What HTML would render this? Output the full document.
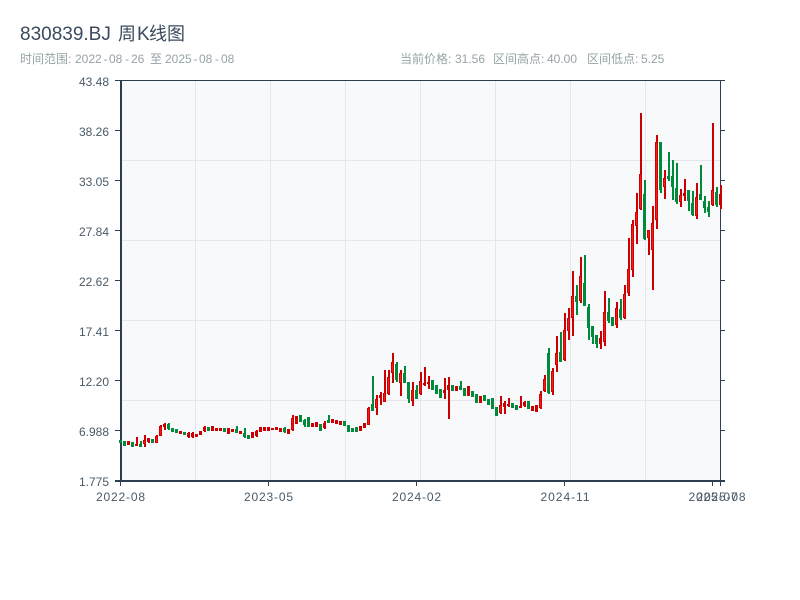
<!DOCTYPE html>
<html lang="zh">
<head>
<meta charset="utf-8">
<title>830839.BJ 周K线图</title>
<style>
html,body{margin:0;padding:0;background:#fff;width:800px;height:600px;overflow:hidden}
svg{display:block}
text{font-family:"Liberation Sans","Noto Sans CJK SC",sans-serif}
</style>
</head>
<body>
<svg width="800" height="600" viewBox="0 0 800 600" xmlns="http://www.w3.org/2000/svg">
<rect width="800" height="600" fill="#fff"/>
<text y="40" font-size="19" fill="#3b4b5c"><tspan x="20">830839.BJ</tspan> <tspan x="118" font-size="18">周</tspan><tspan x="137">K</tspan><tspan x="149" font-size="18">线图</tspan></text>
<text y="63" font-size="12" fill="#95a3a6"><tspan x="20">时间范围: </tspan><tspan x="75">2022</tspan><tspan x="103.500">-</tspan><tspan x="109">08</tspan><tspan x="125">-</tspan><tspan x="131">26</tspan><tspan x="150">至</tspan><tspan x="165">2025</tspan><tspan x="193.500">-</tspan><tspan x="199">08</tspan><tspan x="215">-</tspan><tspan x="221">08</tspan></text>
<text y="63" font-size="12" fill="#95a3a6"><tspan x="400">当前价格: </tspan><tspan x="455">31.56</tspan><tspan x="493">区间高点: </tspan><tspan x="547">40.00</tspan><tspan x="587">区间低点: </tspan><tspan x="641">5.25</tspan></text>

<rect x="120" y="81" width="600" height="400" fill="#f7f9fb"/>
<path d="M195.500 81V481M270.500 81V481M345.500 81V481M420.500 81V481M495.500 81V481M570.500 81V481M645.500 81V481M120 160.500H720M120 240.500H720M120 320.500H720M120 400.500H720" stroke="#e4e6eb" stroke-width="1" fill="none"/>

<path d="M121 80V482M115 481H725" stroke="#2c3e50" stroke-width="2" fill="none"/>
<path d="M720.500 80V481M115 80.500H725" stroke="#2c3e50" stroke-width="1" fill="none"/>
<path d="M115 130.500H120M115 180.500H120M115 230.500H120M115 280.500H120M115 330.500H120M115 380.500H120M115 430.500H120M720 130.500H725M720 180.500H725M720 230.500H725M720 280.500H725M720 330.500H725M720 380.500H725M720 430.500H725M120.500 481V486M268.500 481V486M416.500 481V486M564.500 481V486M712.500 481V486M720.500 481V486" stroke="#2c3e50" stroke-width="1" fill="none"/>

<g font-size="12" fill="#4a5a68" text-anchor="end">
<text x="109" y="86">43.48</text>
<text x="109" y="136">38.26</text>
<text x="109" y="186">33.05</text>
<text x="109" y="236">27.84</text>
<text x="109" y="286">22.62</text>
<text x="109" y="336">17.41</text>
<text x="109" y="386">12.20</text>
<text x="109" y="436">6.988</text>
<text x="109" y="486">1.775</text>
</g>
<g font-size="12" fill="#4a5a68" text-anchor="middle">
<text x="120.500" y="501" textLength="49">2022-08</text>
<text x="268.500" y="501" textLength="49">2023-05</text>
<text x="416.500" y="501" textLength="49">2024-02</text>
<text x="565" y="501" textLength="49">2024-11</text>
<text x="713" y="501" textLength="49">2025-07</text>
<text x="721" y="501" textLength="49">2025-08</text>
</g>

<g transform="translate(1 0)">
<!-- green wicks -->
<path fill="none" stroke="#008a3c" stroke-width="2" d="M120 440V443M124 441V446M132 442V447M140 441V447M152 439V443M168 423V430M172 428V432M176 429V433M184 432V435M208 427V431M224 428V432M236 426V433M244 428V438M248 435V439M284 427V433M300 415V422M304 419V427M308 417V427M320 424V431M328 415V423M344 421V426M348 425V432M352 428V432M356 427V432M372 376V411M396 362V382M404 366V383M408 382V403M416 385V399M432 380V390M436 385V394M440 389V398M452 385V391M460 381V390M464 388V396M472 391V397M476 394V403M484 395V401M488 399V405M492 398V409M496 407V416M512 403V408M516 405V410M528 401V409M548 348V394M560 332V362M576 285V315M584 255V306M588 304V340M592 326V344M596 335V348M608 298V323M612 317V326M620 299V320M644 180V240M660 142V193M668 152V181M672 160V200M676 163V204M688 190V211M692 191V216M700 165V200M704 196V213M708 201V217M716 187V207"/>
<!-- red wicks -->
<path fill="none" stroke="#cc0000" stroke-width="2" d="M128 441V445M136 437V446M144 435V447M148 438V443M156 435V443M160 425V436M164 423V430M180 431V434M188 432V438M192 432V438M196 434V437M200 431V435M204 426V432M212 426V431M216 428V431M220 428V431M228 428V434M232 429V432M240 431V434M252 432V438M256 430V437M260 427V432M264 427V431M268 427V431M272 428V430M276 427V430M280 428V432M288 429V434M292 415V431M296 416V424M312 423V427M316 422V427M324 421V429M332 419V423M336 420V424M340 421V425M360 426V431M364 423V428M368 407V425M376 395V415M380 392V405M384 370V402M388 370V395M392 353V383M400 370V396M412 382V406M420 372V395M424 367V386M428 376V389M444 378V399M448 377V419M456 386V391M468 386V396M480 396V403M500 396V414M504 401V414M508 398V407M520 396V408M524 401V407M532 406V411M536 405V412M540 391V409M544 375V392M552 368V395M556 336V372M564 313V361M568 308V340M572 271V336M580 257V303M600 331V349M604 291V346M616 302V328M624 285V319M628 238V296M632 220V277M636 193V244M640 113V210M648 230V255M652 206V290M656 135V229M664 170V199M680 189V207M684 179V201M696 183V219M712 123V206M720 185V209"/>
</g>
<g transform="translate(0.500 0)">
<!-- green bodies -->
<path fill="none" stroke="#008a3c" stroke-width="3" d="M120 440V443M124 441V446M132 442V447M140 444V447M152 439V443M168 424V429M172 428V432M176 429V433M184 432V435M208 427V431M224 428V432M236 429V433M244 433V437M248 435V439M284 428V432M300 415V422M304 420V425M308 417V427M320 424V431M328 420V423M344 421V426M348 425V432M352 428V432M356 427V432M372 404V411M396 364V380M404 373V383M408 382V399M416 390V399M432 380V390M436 385V394M440 389V398M452 385V391M460 386V390M464 388V396M472 391V397M476 394V403M484 395V401M488 399V405M492 398V409M496 407V416M512 403V408M516 405V410M528 401V409M548 353V393M560 352V362M576 296V302M584 283V306M588 307V328M592 326V337M596 335V344M608 312V321M612 317V326M620 309V318M644 194V239M660 142V190M668 176V179M672 176V187M676 188V202M688 190V201M692 203V215M700 194V200M704 201V208M708 207V212M716 192V205"/>
<!-- red bodies -->
<path fill="none" stroke="#cc0000" stroke-width="3" d="M128 441V445M136 444V446M144 440V444M148 438V442M156 436V443M160 426V436M164 424V427M180 431V434M188 433V437M192 433V437M196 434V437M200 431V435M204 427V431M212 426V431M216 428V431M220 428V431M228 428V434M232 429V432M240 431V434M252 432V438M256 431V436M260 427V432M264 427V431M268 427V431M272 428V430M276 427V430M280 428V432M288 429V434M292 418V430M296 416V424M312 423V427M316 422V427M324 423V428M332 419V423M336 420V424M340 421V425M360 426V431M364 423V428M368 408V425M376 399V408M380 395V398M384 393V402M388 377V394M392 362V373M400 373V383M412 390V401M420 381V394M424 383V385M428 382V384M444 390V393M448 385V390M456 386V391M468 386V396M480 396V403M500 405V413M504 403V407M508 404V406M520 406V408M524 402V406M532 406V411M536 405V412M540 394V408M544 379V391M552 371V392M556 353V365M564 330V360M568 318V331M572 296V318M580 276V301M600 338V344M604 312V342M616 308V325M624 294V318M628 269V293M632 224V270M636 212V226M640 174V209M648 230V238M652 223V250M656 142V220M664 178V187M680 195V202M684 193V196M696 197V216M712 190V205M720 194V205"/>
<!-- red inner highlight -->
<path fill="none" stroke="#f51a1a" stroke-width="1.200" d="M144 441V443M156 437V442M160 427V435M292 419V429M368 409V424M376 400V407M384 394V401M388 378V393M392 363V372M400 374V382M412 391V400M420 382V393M500 406V412M540 395V407M544 380V390M552 372V391M556 354V364M564 331V359M568 319V330M572 297V317M580 277V300M604 313V341M616 309V324M624 295V317M628 270V292M632 225V269M636 213V225M640 175V208M648 231V237M652 224V249M656 143V219M664 179V186M680 196V201M696 198V215M712 191V204"/>
</g>
</svg>
</body>
</html>
